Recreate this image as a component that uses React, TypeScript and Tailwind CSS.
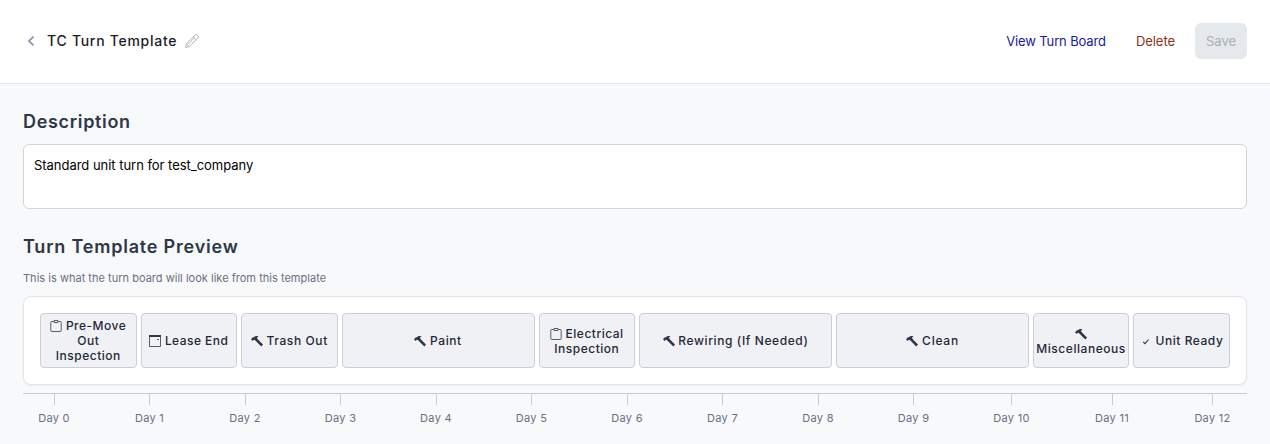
import React, { useState } from 'react';

type StepType = 'inspection' | 'calendar' | 'work' | 'ready';

interface Step {
  name: string;
  type: StepType;
  labelClass: string;
}

const STEPS: Step[] = [
  { name: 'Pre-Move Out Inspection', type: 'inspection', labelClass: 'px-2 tracking-[0.5px]' },
  { name: 'Lease End', type: 'calendar', labelClass: 'tracking-[0.45px]' },
  { name: 'Trash Out', type: 'work', labelClass: 'tracking-[0.6px]' },
  { name: 'Paint', type: 'work', labelClass: 'tracking-[0.6px]' },
  { name: 'Electrical Inspection', type: 'inspection', labelClass: 'px-2 tracking-[0.5px]' },
  { name: 'Rewiring (If Needed)', type: 'work', labelClass: 'tracking-[0.6px]' },
  { name: 'Clean', type: 'work', labelClass: 'tracking-[0.75px]' },
  { name: 'Miscellaneous', type: 'work', labelClass: 'tracking-[0.55px]' },
  { name: 'Unit Ready', type: 'ready', labelClass: 'tracking-[0.55px]' },
];

const DAYS = Array.from({ length: 13 }, (_, i) => i);

function StepIcon({ type }: { type: StepType }) {
  const base = 'inline-block h-3 w-3 align-[-2px]';

  switch (type) {
    case 'inspection':
      return (
        <svg viewBox="0 0 12 12" className={base} fill="none" stroke="#2d3748" strokeWidth="0.8">
          <path d="M3.5 1.5H1.6Q.8 1.5 .8 2.3V10.7Q.8 11.5 1.6 11.5H10.4Q11.2 11.5 11.2 10.7V2.3Q11.2 1.5 10.4 1.5H8.5" />
          <path d="M4 .5H8V2.5H4Z" />
        </svg>
      );
    case 'calendar':
      return (
        <svg viewBox="0 0 12 12" className={base} fill="none" stroke="#2d3748">
          <path d="M.5 1H11.5V11.5H.5Z" strokeWidth="0.8" />
          <path d="M0 1H12" strokeWidth="2" />
          <path d="M8 4.5H10" strokeWidth="0.8" />
        </svg>
      );
    case 'work':
      return (
        <svg viewBox="0 0 12 12" className={base} fill="#2d3748">
          <path d="M0 4.2 1.6 2.5 2.7 2.2C4 .9 5.9 .6 7.6 1.3L6.1 2.3 6.5 4 12 9.5 10.3 11.4 4.6 5.8 3.6 4.9 2.7 4.7 1.6 5.9Z" />
        </svg>
      );
    default:
      return (
        <svg viewBox="0 0 12 12" className={base} fill="none" stroke="#2d3748" strokeWidth="1.1">
          <path d="M3.2 6.8 5 8.6 8.6 4.5" />
        </svg>
      );
  }
}

export default function App() {
  const [description, setDescription] = useState('Standard unit turn for test_company');

  return (
    <div className="min-h-screen bg-[#f8f9fb] font-['Inter',sans-serif]">
      {/* Header */}
      <header className="flex h-[84px] items-center justify-between border-b border-[#e1e4e9] bg-white px-[23px] pb-px">
        <div className="flex items-center">
          <button aria-label="Back" className="mr-3 flex h-4 w-3 items-center justify-end">
            <svg viewBox="0 0 8 10" className="h-2.5 w-2" fill="none" stroke="#8290a5" strokeWidth="1.7">
              <path d="M6.5 .7 2 5 6.5 9.3" />
            </svg>
          </button>
          <h1 className="text-sm font-medium tracking-[0.72px] text-[#1d1d1f]">TC Turn Template</h1>
          <button aria-label="Edit name" className="ml-2">
            <svg viewBox="0 0 14 14" className="h-3.5 w-3.5" fill="none" stroke="#a3abba" strokeWidth="0.9" strokeLinejoin="round">
              <path d="M.6 13.4 1.4 9.8 10 1.1Q11.2 0 12.7 1.2 14 2.7 12.9 4L4.2 12.6Z" />
              <path d="M8.3 2.8 11.2 5.7M1.4 9.8 4.2 12.6M9.8 3.5 3.3 10" />
            </svg>
          </button>
        </div>
        <div className="flex items-center text-[13px]">
          <button className="mr-[30px] pt-0.5 tracking-[-0.13px] text-[#17209b]">View Turn Board</button>
          <button className="mr-5 pt-0.5 tracking-[-0.05px] text-[#8f2f17]">Delete</button>
          <button disabled className="h-9 w-[52px] rounded-md bg-[#e5e8ed] pt-0.5 text-[#a8b0b5]">
            Save
          </button>
        </div>
      </header>

      <main className="px-[23px] pt-6">
        {/* Description */}
        <h2 className="text-lg leading-7 font-semibold tracking-[0.68px] text-[#2d3748]">Description</h2>
        <textarea
          value={description}
          onChange={(e) => setDescription(e.target.value)}
          className="mt-2 block h-[65px] w-full resize-none rounded-md border border-[#d3d4d6] bg-white px-2.5 py-2.5 text-[13px] leading-5 tracking-[-0.03px] text-black outline-none"
        />

        {/* Preview */}
        <h2 className="mt-6 text-lg leading-7 font-semibold tracking-[0.8px] text-[#2d3748]">Turn Template Preview</h2>
        <p className="mt-[9px] text-[11px] leading-4 tracking-[0.02px] text-[#687083]">
          This is what the turn board will look like from this template
        </p>

        <div className="mt-2.5 grid h-[89px] grid-cols-[1fr_1fr_1fr_2fr_1fr_2fr_2fr_0.996fr_1.004fr] gap-1 rounded-lg border border-[#e2e4ea] bg-white p-4 shadow-xs">
          {STEPS.map((step) => (
            <div
              key={step.name}
              className="flex h-[55px] min-w-0 items-center justify-center rounded border border-[#cbced9] bg-[#f0f1f5] text-center text-[12px] leading-[15px] font-medium text-[#1f2937]"
            >
              <span className={step.labelClass}>
                <StepIcon type={step.type} /> {step.name}
              </span>
            </div>
          ))}
        </div>

        {/* Day scale */}
        <div className="mt-2 flex justify-between border-t border-[#c9ccd6] pr-4 pl-[15px]">
          {DAYS.map((day) => (
            <div
              key={day}
              className={`flex flex-col items-center text-[11px] leading-4 whitespace-nowrap tracking-[0.3px] text-[#687083] ${day < 10 ? 'w-8' : 'w-[37px]'}`}
            >
              <span className="h-[11px] w-px bg-[#c9ccd6]" />
              <span className="mt-[5px]">Day {day}</span>
            </div>
          ))}
        </div>
      </main>
    </div>
  );
}
